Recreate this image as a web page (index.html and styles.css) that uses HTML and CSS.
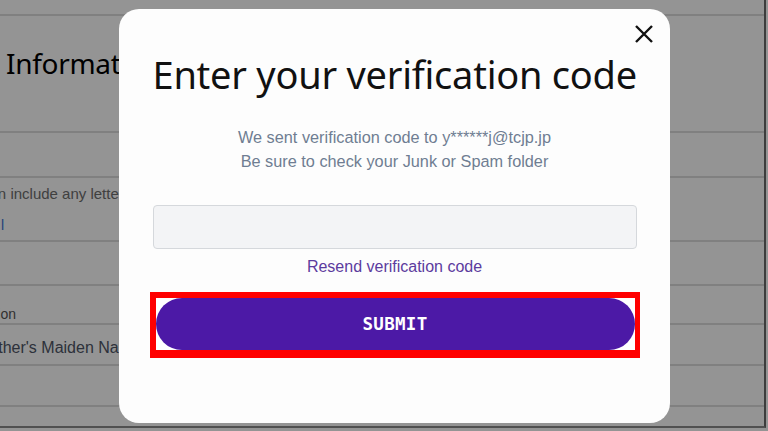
FILE: index.html
```html
<!DOCTYPE html>
<html lang="en">
<head>
<meta charset="utf-8">
<title>Verify</title>
<link rel="stylesheet" href="styles.css">
</head>
<body>
<div class="page">
  <div class="row r-top"></div>
  <div class="row r-head"><h1 class="bg-title">Information</h1></div>
  <div class="row r-a"></div>
  <div class="row r-b">
    <p class="bg-hint">Password can include any letters</p>
    <span class="bg-link">l</span>
  </div>
  <div class="row r-c"></div>
  <div class="row r-d"><p class="bg-small">Question</p></div>
  <div class="row r-e"><p class="bg-label">Mother's Maiden Name</p></div>
  <div class="row r-f"></div>
  <div class="row r-g"></div>
</div>

<div class="overlay">
  <div class="modal">
    <button class="close" aria-label="Close">
      <svg width="20" height="20" viewBox="0 0 20 20"><path d="M2 2 L18 18 M18 2 L2 18" stroke="#111" stroke-width="2.4" fill="none"/></svg>
    </button>
    <h2 class="title">Enter your verification code</h2>
    <p class="sub">We sent verification code to y******j@tcjp.jp<br>Be sure to check your Junk or Spam folder</p>
    <input class="code" type="text" aria-label="Verification code">
    <a class="resend" href="#">Resend verification code</a>
    <div class="highlight">
      <button class="submit">SUBMIT</button>
    </div>
  </div>
</div>
</body>
</html>
```

FILE: styles.css
```css
html, body {
  margin: 0;
  padding: 0;
  width: 768px;
  height: 431px;
  overflow: hidden;
  background: #ffffff;
  font-family: "Liberation Sans", Arial, sans-serif;
}

.page {
  width: 766px;
  height: 428px;
  border-right: 2px solid #6a6a6a;
  border-bottom: 2px solid #8a8a8a;
  box-sizing: border-box;
  display: flex;
  flex-direction: column;
}

.row {
  border-bottom: 2px solid #dcdcdc;
  box-sizing: border-box;
  position: relative;
  padding-left: 6px;
}
.r-top { height: 16px; }
.r-head { height: 118px; padding-top: 28px; }
.r-a { height: 45px; }
.r-b { height: 65px; padding-top: 7px; }
.r-c { height: 44px; }
.r-d { height: 39px; padding-top: 20px; padding-left: 0; }
.r-e { height: 42px; padding-left: 0; }
.r-f { height: 41px; }
.r-g { height: 19px; border-bottom: none; }

.bg-title {
  margin: 0;
  font-family: "Noto Sans", sans-serif;
  font-weight: 400;
  font-size: 28px;
  color: #000;
  letter-spacing: -0.3px;
}
.bg-hint {
  margin: 0 0 0 -94px;
  font-size: 15px;
  color: #6e6e6e;
  white-space: nowrap;
}
.bg-link {
  display: block;
  margin-top: 15px;
  margin-left: -5px;
  color: #3b6fd0;
  font-size: 14px;
}
.bg-small {
  margin: 0 0 0 -40px;
  font-size: 14px;
  color: #555;
  white-space: nowrap;
}
.bg-label {
  margin: 14px 0 0 -24px;
  font-size: 16px;
  color: #4e5566;
  white-space: nowrap;
}

.overlay {
  position: fixed;
  inset: 0;
  background: rgba(0, 0, 0, 0.42);
  display: flex;
  align-items: center;
  justify-content: center;
  padding-left: 20px;
  box-sizing: border-box;
}

.modal {
  position: relative;
  width: 551px;
  height: 414px;
  box-sizing: border-box;
  background: #fdfdfd;
  border-radius: 20px;
  padding: 41px 33px 0 34px;
  display: flex;
  flex-direction: column;
  align-items: stretch;
}

.close {
  position: absolute;
  top: 15px;
  right: 16px;
  width: 20px;
  height: 20px;
  padding: 0;
  border: none;
  background: none;
  cursor: pointer;
}
.close svg { display: block; }

.title {
  margin: 0;
  text-align: center;
  font-family: "Noto Sans", sans-serif;
  font-weight: 400;
  font-size: 38px;
  line-height: 48px;
  color: #111;
  letter-spacing: -0.25px;
  white-space: nowrap;
}

.sub {
  margin: 27px 0 0;
  text-align: center;
  font-size: 16.3px;
  line-height: 24px;
  color: #6f7d92;
}

.code {
  margin-top: 32px;
  height: 44px;
  box-sizing: border-box;
  border: 1px solid #d5d8dc;
  border-radius: 4px;
  background: #f3f4f6;
  width: 100%;
}

.resend {
  margin-top: 7px;
  text-align: center;
  font-size: 16px;
  line-height: 22px;
  color: #5c3b9e;
  text-decoration: none;
}

.highlight {
  margin: 14px -3px 0 -3px;
  border-style: solid;
  border-color: #ff0000;
  border-width: 6px 5px 8px 6px;
  background: #ffffff;
}

.submit {
  display: block;
  width: 100%;
  height: 52px;
  border: none;
  border-radius: 26px;
  background: #4c19a6;
  color: #ffffff;
  font-family: "DejaVu Sans Mono", "Liberation Mono", monospace;
  font-weight: bold;
  font-size: 17.5px;
  letter-spacing: 0.3px;
  cursor: pointer;
}
```
